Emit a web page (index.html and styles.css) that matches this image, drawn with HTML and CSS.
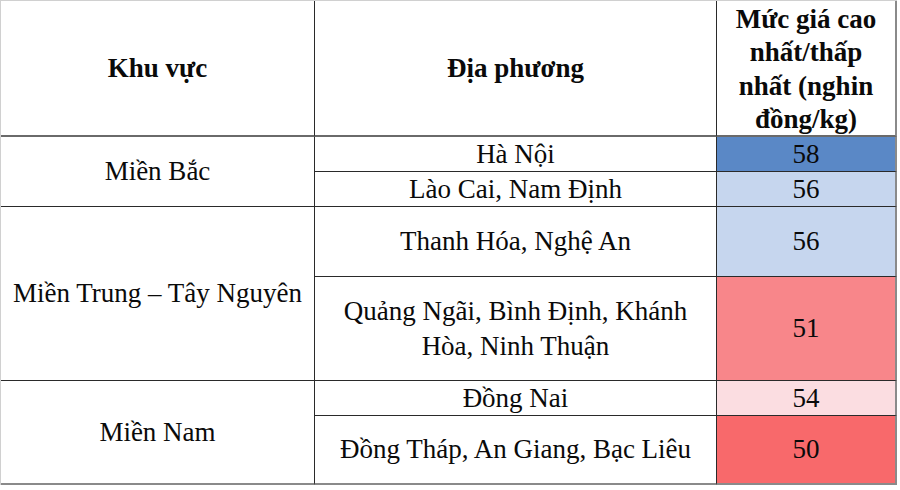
FILE: index.html
```html
<!DOCTYPE html>
<html lang="vi">
<head>
<meta charset="utf-8">
<title>Mức giá</title>
<link rel="stylesheet" href="styles.css">
</head>
<body>
<div class="sheet">
  <div class="cell head">Khu vực</div>
  <div class="cell head">Địa phương</div>
  <div class="cell head last multi">Mức giá cao<br>nhất/thấp<br>nhất (nghin<br>đồng/kg)</div>

  <div class="cell region span2">Miền Bắc</div>
  <div class="cell">Hà Nội</div>
  <div class="cell last c58">58</div>
  <div class="cell">Lào Cai, Nam Định</div>
  <div class="cell last c56">56</div>

  <div class="cell region span2 nowrap">Miền Trung – Tây Nguyên</div>
  <div class="cell">Thanh Hóa, Nghệ An</div>
  <div class="cell last c56">56</div>
  <div class="cell multi2">Quảng Ngãi, Bình Định, Khánh<br>Hòa, Ninh Thuận</div>
  <div class="cell last c51">51</div>

  <div class="cell region span2 bottom">Miền Nam</div>
  <div class="cell">Đồng Nai</div>
  <div class="cell last c54">54</div>
  <div class="cell bottom">Đồng Tháp, An Giang, Bạc Liêu</div>
  <div class="cell last bottom c50">50</div>
</div>
</body>
</html>
```

FILE: styles.css
```css
html, body {
  margin: 0;
  padding: 0;
  background: #ffffff;
}

.sheet {
  display: grid;
  grid-template-columns: 314px 402px 180px;
  grid-template-rows: 136px 35px 35px 70px 104px 35px 69px;
  width: max-content;
  border-left: 1px solid #d0d0d0;
  border-top: 1px solid #d0d0d0;
  font-family: "Liberation Serif", "Times New Roman", serif;
  font-size: 27px;
  color: #0a0a0a;
}

.cell {
  box-sizing: border-box;
  display: flex;
  align-items: center;
  justify-content: center;
  text-align: center;
  border-right: 1px solid #2a2a2a;
  border-bottom: 1px solid #2a2a2a;
  line-height: 31px;
}

.head {
  font-weight: bold;
  border-bottom: 2px solid #6a6a6a;
}

.multi {
  line-height: 33.5px;
  padding-top: 3px;
}

.multi2 {
  line-height: 35px;
}

.last {
  border-right: 2px solid #8a8a8a;
}

.bottom {
  border-bottom: 2px solid #8a8a8a;
}

.span2 {
  grid-row: span 2;
}

.nowrap {
  white-space: nowrap;
}

.c58 { background: #5a88c6; }
.c56 { background: #c6d6ee; }
.c51 { background: #f8868a; }
.c54 { background: #fbdde1; }
.c50 { background: #f8696b; }
```
